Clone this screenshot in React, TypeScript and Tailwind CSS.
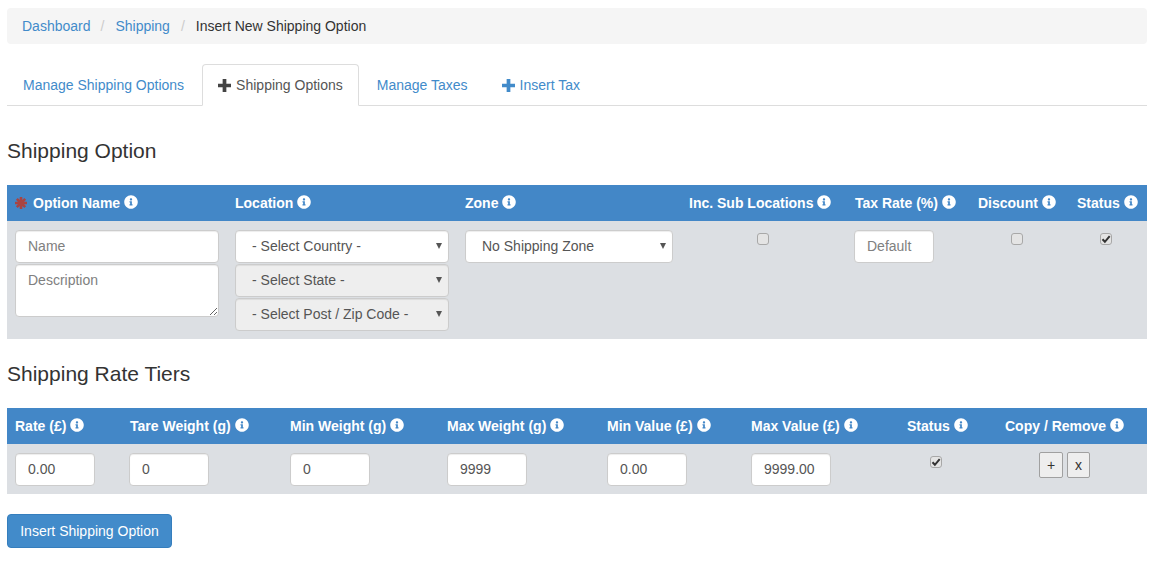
import { FaInfoCircle } from 'react-icons/fa'

// bootstrap 3 style admin form: insert shipping option

function Info() {
  return <FaInfoCircle className="inline-block w-[14px] h-[14px] ml-[4px] -mt-[5px] align-middle text-white" />
}

function Plus({ className }: { className: string }) {
  return (
    <svg viewBox="0 0 14 14" className={`inline-block w-[13px] h-[13px] mr-[5px] -mt-[2px] align-middle ${className}`}>
      <path d="M5 0h4v5h5v4H9v5H5V9H0V5h5z" fill="currentColor" />
    </svg>
  )
}

function Asterisk() {
  return (
    <svg viewBox="0 0 12 12" className="inline-block w-[12px] h-[12px] mr-[6px] -mt-[2px] align-middle text-[#a94442]">
      <g stroke="currentColor" strokeWidth="2.6">
        <path d="M6 0v12M0 6h12M1.8 1.8l8.4 8.4M10.2 1.8l-8.4 8.4" />
      </g>
    </svg>
  )
}

function TextInput({ placeholder, value, className = '' }: { placeholder?: string; value?: string; className?: string }) {
  return (
    <input
      type="text"
      placeholder={placeholder}
      defaultValue={value}
      className={`h-[33px] px-[12px] pb-[2px] bg-white border border-[#ccc] rounded-[4px] text-[14px] text-[#555] placeholder:text-[#808080] shadow-[inset_0_1px_1px_rgba(0,0,0,0.075)] outline-none ${className}`}
    />
  )
}

function Select({ label, disabled, className = '' }: { label: string; disabled?: boolean; className?: string }) {
  return (
    <div className={`relative ${className}`}>
      <select
        disabled={disabled}
        className={`w-full h-[33px] pl-[16px] pr-[20px] pb-[2px] appearance-none border border-[#ccc] rounded-[4px] text-[14px] text-[#555] opacity-100 shadow-[inset_0_1px_1px_rgba(0,0,0,0.075)] outline-none ${disabled ? 'bg-[#eee]' : 'bg-white'}`}
      >
        <option>{label}</option>
      </select>
      <svg viewBox="0 0 6 6" className="absolute right-[7px] top-[13px] w-[6px] h-[6px] text-[#555]">
        <path d="M0 0h6L3 6z" fill="currentColor" />
      </svg>
    </div>
  )
}

function Check({ checked, className = '' }: { checked?: boolean; className?: string }) {
  return (
    <label className={`relative block w-[12px] h-[12px] ${className}`}>
      <input
        type="checkbox"
        defaultChecked={checked}
        className="block w-[12px] h-[12px] appearance-none bg-[#e4e4e4] border border-[#a8a8a8] rounded-[3px]"
      />
      {checked && (
        <svg viewBox="0 0 12 12" className="absolute left-0 top-0 w-[12px] h-[12px] text-[#333]">
          <path d="M2.5 6.2l2.4 2.6 4.8-5.6" fill="none" stroke="currentColor" strokeWidth="2" />
        </svg>
      )}
    </label>
  )
}

const optionHeads = ['Location', 'Zone', 'Inc. Sub Locations', 'Tax Rate (%)', 'Discount', 'Status']

const tierHeads = ['Rate (£)', 'Tare Weight (g)', 'Min Weight (g)', 'Max Weight (g)', 'Min Value (£)', 'Max Value (£)', 'Status', 'Copy / Remove']
const tierValues = ['0.00', '0', '0', '9999', '0.00', '9999.00']

export default function App() {
  return (
    <div className="min-h-[563px] bg-white px-[7px] pt-[8px] pr-[6px] text-[14px] text-[#333] leading-[20px] font-['Liberation_Sans',Arial,sans-serif]">
      {/* breadcrumb */}
      <div className="h-[36px] flex items-center px-[15px] bg-[#f5f5f5] rounded-[4px]">
        <a className="text-[#428bca]">Dashboard</a>
        <span className="pl-[10px] pr-[11px] text-[#ccc]">/</span>
        <a className="text-[#428bca]">Shipping</a>
        <span className="px-[11px] text-[#ccc]">/</span>
        <span>Insert New Shipping Option</span>
      </div>

      {/* tabs */}
      <div className="flex h-[42px] mt-[20px] border-b border-[#ddd]">
        <a className="h-[41px] mr-[2px] px-[15px] pt-[10px] border border-transparent text-[#428bca]">Manage Shipping Options</a>
        <a className="h-[42px] mr-[2px] px-[15px] pt-[10px] bg-white border border-[#ddd] border-b-white rounded-t-[4px] text-[#555]">
          <Plus className="text-[#444]" />
          Shipping Options
        </a>
        <a className="h-[41px] mr-[2px] px-[15px] pt-[10px] border border-transparent text-[#428bca]">Manage Taxes</a>
        <a className="h-[41px] px-[15px] pt-[10px] border border-transparent text-[#428bca]">
          <Plus className="text-[#428bca]" />
          Insert Tax
        </a>
      </div>

      <h2 className="mt-[34px] text-[21px] leading-[22px] font-normal">Shipping Option</h2>

      {/* shipping option table */}
      <div className="mt-[23px]">
        <div className="grid grid-cols-[220px_230px_224px_166px_123px_99px_78px] h-[36px] items-center bg-[#4387c7] text-white font-bold">
          <div className="pl-[8px] whitespace-nowrap">
            <Asterisk />
            Option Name
            <Info />
          </div>
          {optionHeads.map((h) => (
            <div key={h} className="pl-[8px] whitespace-nowrap">
              {h}
              <Info />
            </div>
          ))}
        </div>
        <div className="grid grid-cols-[220px_230px_224px_166px_123px_99px_78px] h-[118px] pt-[9px] bg-[#dcdfe3]">
          <div className="pl-[8px] flex flex-col gap-px">
            <TextInput placeholder="Name" className="w-[204px]" />
            <textarea
              placeholder="Description"
              className="block w-[204px] h-[53px] px-[12px] pt-[5px] pb-[7px] bg-white border border-[#ccc] rounded-[4px] text-[14px] text-[#555] placeholder:text-[#808080] shadow-[inset_0_1px_1px_rgba(0,0,0,0.075)] outline-none"
            />
          </div>
          <div className="pl-[8px] flex flex-col gap-px">
            <Select label="- Select Country -" className="w-[214px]" />
            <Select label="- Select State -" disabled className="w-[214px]" />
            <Select label="- Select Post / Zip Code -" disabled className="w-[214px]" />
          </div>
          <div className="pl-[8px]">
            <Select label="No Shipping Zone" className="w-[208px]" />
          </div>
          <div>
            <Check className="ml-[76px] mt-[3px]" />
          </div>
          <div className="pl-[7px]">
            <TextInput placeholder="Default" className="w-[80px]" />
          </div>
          <div>
            <Check className="ml-[41px] mt-[3px]" />
          </div>
          <div>
            <Check checked className="ml-[31px] mt-[3px]" />
          </div>
        </div>
      </div>

      <h2 className="mt-[24px] text-[21px] leading-[22px] font-normal">Shipping Rate Tiers</h2>

      {/* rate tiers table */}
      <div className="mt-[23px]">
        <div className="grid grid-cols-[115px_160px_157px_160px_144px_156px_98px_150px] h-[36px] items-center bg-[#4387c7] text-white font-bold">
          {tierHeads.map((h) => (
            <div key={h} className="pl-[8px] whitespace-nowrap">
              {h}
              <Info />
            </div>
          ))}
        </div>
        <div className="grid grid-cols-[115px_160px_157px_160px_144px_156px_98px_150px] h-[50px] pt-[9px] bg-[#dcdfe3]">
          {tierValues.map((v, i) => (
            <div key={i} className={i === 1 ? 'pl-[7px]' : 'pl-[8px]'}>
              <TextInput value={v} className="w-[80px]" />
            </div>
          ))}
          <div>
            <Check checked className="ml-[31px] mt-[3px]" />
          </div>
          <div className="pl-[42px] flex gap-[4px] -mt-px">
            <button className="w-[24px] h-[26px] bg-[#eee] border border-[#a0a0a0] rounded-[2px] text-[14px] leading-none text-[#333]">+</button>
            <button className="w-[23px] h-[26px] bg-[#eee] border border-[#a0a0a0] rounded-[2px] text-[14px] leading-none text-[#333]">x</button>
          </div>
        </div>
      </div>

      <button className="block mt-[20px] w-[165px] h-[34px] bg-[#428bca] border border-[#357ebd] rounded-[4px] text-white text-[14px]">
        Insert Shipping Option
      </button>
    </div>
  )
}
